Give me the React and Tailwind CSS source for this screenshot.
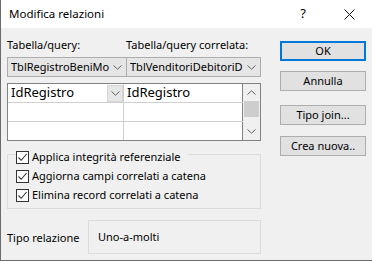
import React from "react";

const font = { fontFamily: '"Noto Sans", "Open Sans", sans-serif' };

function Chevron({ up = false, className = "" }) {
  return (
    <svg width="9" height="5" viewBox="0 0 9 5" className={className}>
      <path
        d={up ? "M0.5 4.5 L4.5 0.8 L8.5 4.5" : "M0.5 0.5 L4.5 4.2 L8.5 0.5"}
        fill="none"
        stroke="#606060"
        strokeWidth="1"
      />
    </svg>
  );
}

function Check() {
  return (
    <div className="w-[13px] h-[13px] border border-[#333333] bg-white flex items-center justify-center shrink-0">
      <svg width="11" height="11" viewBox="0 0 11 11">
        <path d="M1.5 5.5 L4.2 8.3 L9.6 2" fill="none" stroke="#333333" strokeWidth="1.1" />
      </svg>
    </div>
  );
}

function Btn({ children, primary = false, className = "" }) {
  return (
    <div
      className={
        "w-[86px] h-[20px] flex items-center justify-center text-[11px] text-black bg-[#e1e1e1] " +
        (primary ? "border-2 border-[#0078d7]" : "border border-[#adadad]") +
        " " +
        className
      }
    >
      {children}
    </div>
  );
}

export default function App() {
  return (
    <div
      className="w-[372px] h-[261px] bg-[#f0f0f0] border-l border-b border-[#6b6b6b] flex flex-col overflow-hidden"
      style={font}
    >
      {/* title bar */}
      <div className="h-[28px] bg-white flex items-center shrink-0">
        <div className="pl-[8px] text-[11.5px] text-black flex-1">Modifica relazioni</div>
        <div className="w-[46px] flex justify-center text-[13px] text-black">?</div>
        <div className="w-[46px] flex justify-center">
          <svg width="11" height="11" viewBox="0 0 11 11">
            <path d="M0.5 0.5 L10.5 10.5 M10.5 0.5 L0.5 10.5" stroke="#111" strokeWidth="1" />
          </svg>
        </div>
      </div>

      {/* body */}
      <div className="flex pl-[6px]">
        {/* left column */}
        <div className="w-[254px] flex flex-col">
          <div className="flex pt-[9px] text-[11px] text-black leading-[16px]">
            <div className="w-[119px]">Tabella/query:</div>
            <div>Tabella/query correlata:</div>
          </div>
          <div className="flex mt-[4px] h-[20px]">
            <div className="w-[120px] h-full bg-[#e5e5e5] border border-[#adadad] flex items-center pl-[3px] pr-[4px] text-[11px] text-black">
              <span className="flex-1 overflow-hidden whitespace-nowrap">TblRegistroBeniMo</span>
              <Chevron className="ml-[3px]" />
            </div>
            <div className="w-[135px] -ml-px h-full bg-[#e5e5e5] border border-[#adadad] flex items-center pl-[3px] pr-[4px] text-[11px] text-black">
              <span className="flex-1 overflow-hidden whitespace-nowrap">TblVenditoriDebitoriD</span>
              <Chevron className="ml-[3px]" />
            </div>
          </div>

          {/* grid */}
          <div className="mt-[6px] h-[58px] border border-[#828282] bg-white flex">
            <div className="flex-1 flex flex-col">
              <div className="flex h-[19px] border-b border-[#cfcfcf]">
                <div className="w-[116px] border-r border-[#cfcfcf] flex items-center pl-[3px] text-[13px] text-black">
                  <span className="flex-1">IdRegistro</span>
                  <div className="w-[16px] h-[17px] bg-[#e6e6e6] border border-[#d6d6d6] flex items-center justify-center">
                    <Chevron />
                  </div>
                </div>
                <div className="flex-1 flex items-center pl-[3px] text-[13px] text-black border-r border-[#828282]">IdRegistro</div>
              </div>
              <div className="flex h-[19px] border-b border-[#cfcfcf]">
                <div className="w-[116px] border-r border-[#cfcfcf]" />
                <div className="flex-1 border-r border-[#828282]" />
              </div>
              <div className="flex flex-1">
                <div className="w-[116px] border-r border-[#cfcfcf]" />
                <div className="flex-1 border-r border-[#828282]" />
              </div>
            </div>
            <div className="w-[17px] bg-[#f0f0f0] flex flex-col items-center">
              <div className="h-[17px] flex items-center justify-center">
                <Chevron up />
              </div>
              <div className="w-[15px] h-[16px] bg-[#cdcdcd]" />
              <div className="flex-1" />
              <div className="h-[17px] flex items-center justify-center">
                <Chevron />
              </div>
            </div>
          </div>

          {/* group box */}
          <div className="mt-[13px] h-[55px] border border-[#dcdcdc] flex flex-col pl-[8px] text-[11px] text-black">
            <div className="-mt-[5px] flex items-center gap-[3px] bg-[#f0f0f0] self-start pr-[7px] h-[14px]">
              <Check />
              <span>Applica integrità referenziale</span>
            </div>
            <div className="mt-[5px] flex items-center gap-[3px] h-[14px]">
              <Check />
              <span>Aggiorna campi correlati a catena</span>
            </div>
            <div className="mt-[5px] flex items-center gap-[3px] h-[14px]">
              <Check />
              <span>Elimina record correlati a catena</span>
            </div>
          </div>

          {/* relation type */}
          <div className="mt-[11px] flex items-center text-[11px] text-black">
            <div className="w-[81px] pt-[3px]">Tipo relazione</div>
            <div className="flex-1 h-[34px] border border-[#dcdcdc] flex items-center pl-[9px]">Uno-a-molti</div>
          </div>
        </div>

        {/* right column */}
        <div className="ml-[19px] flex flex-col">
          <Btn primary className="mt-[13px]">OK</Btn>
          <Btn className="mt-[10px]">Annulla</Btn>
          <Btn className="mt-[14px]">Tipo join...</Btn>
          <Btn className="mt-[11px]">Crea nuova..</Btn>
        </div>
      </div>
    </div>
  );
}
